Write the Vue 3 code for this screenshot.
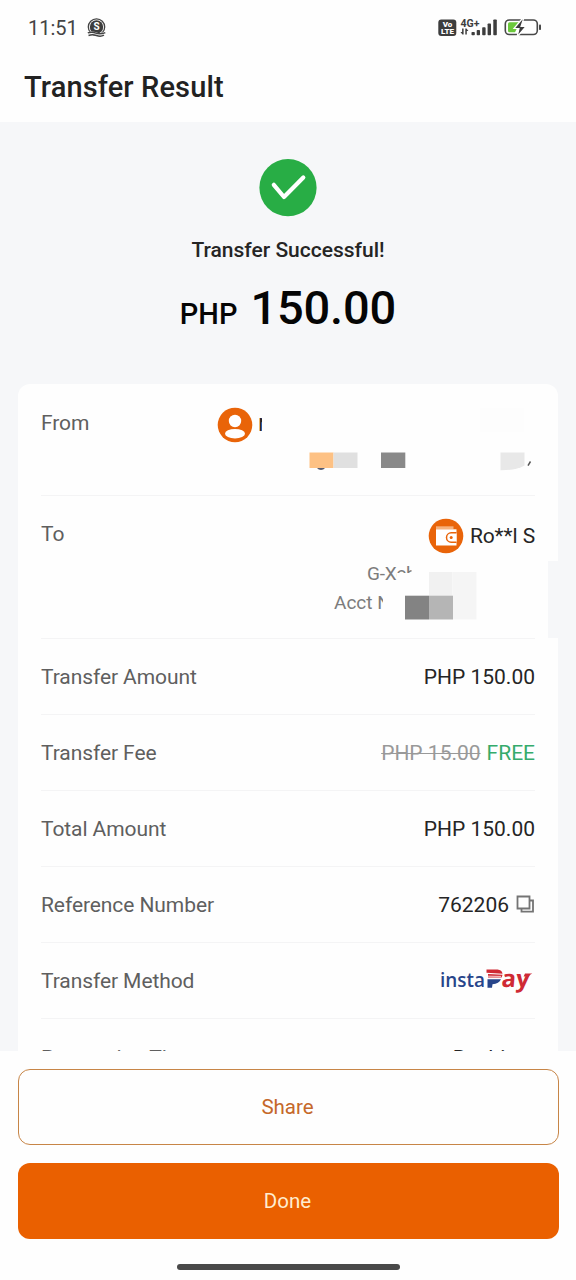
<script setup>
const rows = [
  { label: 'Transfer Amount', value: 'PHP 150.00' },
  { label: 'Transfer Fee', value: 'FREE', old: 'PHP 15.00', free: true },
  { label: 'Total Amount', value: 'PHP 150.00' },
  { label: 'Reference Number', value: '762206', copy: true },
  { label: 'Transfer Method', logo: true },
  { label: 'Processing Time', value: 'Realtime' },
]
</script>

<template>
  <div class="screen">
    <header>
      <div class="status">
        <span class="time">11:51</span>
        <svg class="coin" width="20" height="20" viewBox="0 0 20 20">
          <circle cx="9.500" cy="9" r="8.200" fill="none" stroke="#444" stroke-width="1.300" />
          <circle cx="9.500" cy="9" r="6.700" fill="#3d3d3d" />
          <text x="9.500" y="12.400" text-anchor="middle" class="coin-s">S</text>
          <path d="M1 15.700q4-1.500 8 .2t9-.5" fill="none" stroke="#fff" stroke-width="3" />
          <path d="M.8 14.900q4-1.500 8 .2t9.500-.5M1.500 17.500q4-1.500 8 0t7.500-.3" fill="none" stroke="#444" stroke-width="1.500" />
        </svg>
        <svg class="phone-icons" width="104" height="20" viewBox="0 0 104 20">
          <rect x="0.300" y="1.500" width="18" height="16.500" rx="3" fill="#3d3d3d" />
          <text x="9.500" y="8.900" text-anchor="middle" class="volte">Vo</text>
          <text x="9.500" y="16" text-anchor="middle" class="volte">LTE</text>
          <text x="22.500" y="8.600" class="network" textLength="19" lengthAdjust="spacingAndGlyphs">4G+</text>
          <g fill="#3d3d3d">
            <path d="M25.600 10.500v6h-1.200l-1.900-2.400h1.600v-3.600zM27.300 16.500v-6h1.200l1.900 2.400h-1.600v3.600z" />
            <rect x="33.500" y="14" width="3.300" height="3.300" rx=".8" />
            <rect x="38.700" y="12" width="3.300" height="5.300" rx=".8" />
            <rect x="44.200" y="9.200" width="3.400" height="8.100" rx=".8" />
            <rect x="49.600" y="5.500" width="3.400" height="11.800" rx=".8" />
            <rect x="55.300" y="1.500" width="3.500" height="15.800" rx=".8" />
          </g>
          <rect x="67.300" y="2" width="32" height="14.500" rx="4" fill="#fff" stroke="#484848" stroke-width="1.600" />
          <path d="M71.500 4.300H82l-5 10h-5.500q-1.500 0-1.500-1.500v-7q0-1.500 1.500-1.500z" fill="#6bc83b" />
          <path d="M84 1l-8 9.500h5L79 19l9-10.500h-5L85.500 1z" fill="#3d3d3d" stroke="#fff" stroke-width="1.200" />
          <rect x="101" y="6.500" width="2" height="5.500" rx=".8" fill="#484848" />
        </svg>
      </div>
      <h1>Transfer Result</h1>
    </header>

    <main>
      <section class="result">
        <svg width="58" height="58" viewBox="0 0 58 58">
          <circle cx="29" cy="28.700" r="28.600" fill="#28ad45" />
          <path d="M14.800 25.800l10.200 12.200L44.300 18.500" fill="none" stroke="#fff" stroke-width="4.200" stroke-linecap="round" stroke-linejoin="round" />
        </svg>
        <p class="success">Transfer Successful!</p>
        <p class="amount"><span class="currency">PHP</span><span>150.00</span></p>
      </section>

      <section class="card">
        <div class="row from">
          <span class="label">From</span>
          <svg class="avatar" width="36" height="36" viewBox="0 0 36 36">
            <circle cx="18" cy="18" r="17.300" fill="#e96409" />
            <circle cx="18" cy="14" r="6.200" fill="#fff" />
            <ellipse cx="18" cy="26.700" rx="10" ry="4.800" fill="#fff" />
          </svg>
          <span class="clipped-name">N</span>
          <svg class="mask" width="240" height="70" viewBox="0 0 240 70">
            <rect x="180" y="0" width="44" height="24" fill="#fdfdfd" />
            <path d="M17 60h8q-1.500 2-4 2t-4-2z" fill="#555b70" />
            <rect x="9.500" y="44.500" width="24" height="15.500" fill="#fdc184" />
            <rect x="33.500" y="44.500" width="24" height="15.500" fill="#e0e0e0" />
            <rect x="81" y="44.500" width="24.300" height="15.500" fill="#898989" />
            <path d="M200.500 44.500h24v13q-9 5-24 4.800z" fill="#e8e8e8" />
            <path d="M228 57.700l2.500-4.200" stroke="#555" stroke-width="1.500" />
          </svg>
        </div>
        <div class="row to">
          <span class="label">To</span>
          <div class="recipient">
            <div class="person">
              <svg width="36" height="36" viewBox="0 0 36 36">
                <circle cx="18" cy="18" r="17.300" fill="#e96409" />
                <path d="M8 8.300h17.500v3H8z" fill="#f7b17c" />
                <path d="M8 11.300h20.500v16.200H8z" fill="#fff" />
                <path d="M28.500 14.800h-5.300a4.700 4.700 0 0 0 0 9.400h5.300" fill="#fff" stroke="#e96409" stroke-width="1.500" />
                <circle cx="23.200" cy="19.500" r="1.500" fill="#e96409" />
              </svg>
              <span>Ro**l S</span>
            </div>
            <span class="bank">G-Xch</span>
            <span class="account">Acct N</span>
            <svg class="mask" width="180" height="70" viewBox="0 0 180 70">
              <path d="M39.500 5h100v58H11V27h14V16h14.500z" fill="#fefefe" />
              <rect x="57" y="15" width="23.500" height="24" fill="#f1f1f1" />
              <rect x="80.500" y="15" width="24" height="47.500" fill="#f5f5f5" />
              <rect x="33" y="38.700" width="24" height="23.800" fill="#838383" />
              <rect x="57" y="38.700" width="24" height="23.800" fill="#b5b5b5" />
            </svg>
          </div>
          <span class="edge"></span>
        </div>

        <div v-for="row in rows" :key="row.label" class="row">
          <span class="label">{{ row.label }}</span>
          <span class="value">
            <s v-if="row.old">{{ row.old }}</s>
            <span v-if="row.value" :class="{ free: row.free }">{{ row.value }}</span>
            <svg v-if="row.copy" class="copy" width="19" height="19" viewBox="0 0 19 19">
              <path d="M1.500 1.500h12v12h-12zM5.500 13.500v3.200h11.500V5.500h-3.500" fill="none" stroke="#747474" stroke-width="1.800" />
            </svg>
            <svg v-if="row.logo" class="logo" width="96" height="28" viewBox="0 0 96 28">
              <text x="1" y="21" class="insta" textLength="45" lengthAdjust="spacingAndGlyphs">insta</text>
              <path d="M48.500 13.300h13.500q-2 4.500-8.500 4.900l-.5 3.500h-4.500z" fill="#27458a" />
              <path d="M47.500 3.500h11q4.500.5 5 4.200l-16-1z" fill="#cf2a34" />
              <path d="M49 8l14.500.8-.8 2.700H49z" fill="#cf2a34" />
              <path d="M49 10.200l13 .2" stroke="#fff" stroke-width=".8" />
              <g transform="translate(62 21) skewX(-5)">
                <text x="0" y="0" class="pay" textLength="28" lengthAdjust="spacingAndGlyphs">ay</text>
              </g>
              <path d="M86 7.500h7.300q-2.500 1-3.700 3.100h-5z" fill="#cf2a34" />
            </svg>
          </span>
        </div>
      </section>
    </main>

    <footer>
      <button class="share">Share</button>
      <button class="done">Done</button>
      <div class="home"></div>
    </footer>
  </div>
</template>

<style>
body { margin: 0; }
</style>

<style scoped>
* { box-sizing: border-box; }
.screen {
  width: 576px;
  height: 1280px;
  display: flex;
  flex-direction: column;
  overflow: hidden;
  background: #fefefe;
  font-family: Roboto, "Liberation Sans", sans-serif;
  font-size: 21px;
  color: #252525;
}
svg { display: block; flex: none; }
header { height: 122px; flex: none; }
.status { height: 56px; display: flex; align-items: center; padding: 0 34px 0 28px; }
.time { font-size: 20px; color: #444; }
.coin { margin-left: 9px; }
.coin-s { font: 700 10px Roboto, sans-serif; fill: #fff; }
.phone-icons { margin-left: auto; }
.volte { font: 900 8px Roboto, sans-serif; fill: #fff; }
.network { font: 700 10px Roboto, sans-serif; fill: #3d3d3d; }
h1 { margin: 13px 0 0 24px; font-size: 29px; line-height: 36px; font-weight: 500; letter-spacing: .12px; color: #222; }
main { height: 929px; flex: none; overflow: hidden; background: #f6f7f9; padding: 37px 18px 0; }
.result { height: 225px; display: flex; flex-direction: column; align-items: center; }
.result p { margin: 0; font-weight: 500; }
.success { padding-top: 20px; line-height: 26px; font-size: 21px; }
.result .amount { display: flex; align-items: baseline; gap: 13px; margin-top: 16px; font-size: 47px; line-height: 58px; color: #050505; }
.result .amount span:last-child { letter-spacing: -.15px; }
.currency { font-size: 29px; }
.card { background: #fefefe; border-radius: 12px; padding: 0 23px; }
.row { position: relative; height: 76px; display: flex; justify-content: space-between; align-items: center; border-bottom: 1px solid #f4f4f5; }
.row:last-child { height: 78px; }
.label { color: #5f5f5f; letter-spacing: -.08px; }
.from { height: 112px; align-items: flex-start; justify-content: flex-start; }
.from .label { width: 175.500px; padding-top: 27px; }
.avatar { margin-top: 23px; }
.clipped-name { width: 4px; height: 15px; line-height: 21px; margin: 32px 0 0 5.500px; overflow: hidden; }
.from .mask { position: absolute; left: 259px; top: 24px; }
.to { height: 143px; align-items: flex-start; }
.to .label { padding-top: 26px; }
.recipient { width: 300px; padding-top: 22px; }
.person { display: flex; align-items: center; justify-content: flex-end; gap: 6px; letter-spacing: -.1px; }
.bank, .account { display: block; width: max-content; font-size: 19px; line-height: 29px; color: #7c7c7c; }
.bank { margin: 5px 0 0 132px; letter-spacing: -.2px; }
.account { margin-left: 99px; }
.to .mask { position: absolute; left: 331px; top: 61px; }
.edge { position: absolute; right: -23px; top: 65px; width: 10px; height: 77px; background: #f6f7f9; }
.value { display: flex; align-items: center; gap: 6px; }
.value s { color: #999; text-decoration-thickness: 1px; }
.free { color: #35ab6b; }
.copy { margin-left: 1px; }
.logo { margin-top: -2px; }
.insta { font: 600 20px "Open Sans", sans-serif; fill: #27458a; }
.pay { font: 700 24px "Open Sans", sans-serif; fill: #cf2a34; }
footer { padding: 18px 17.500px; }
button { display: block; width: 541px; height: 76px; border-radius: 12px; font: 400 20.500px Roboto, sans-serif; padding: 0 1px 1px 0; }
.share { border: 1.500px solid #c78547; background: #fefefe; color: #c5682a; }
.done { margin-top: 18px; border: 0; background: #ea6000; color: #ffedcf; }
.home { width: 223px; height: 6px; border-radius: 3px; background: #494949; margin: 25px auto 0; }
</style>
